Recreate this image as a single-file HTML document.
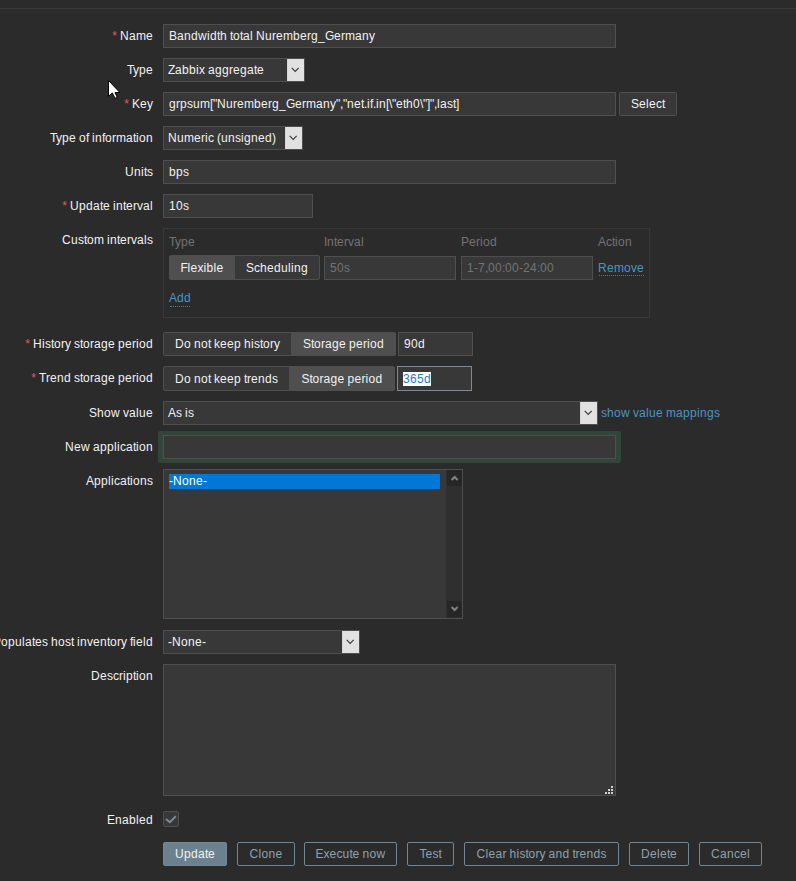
<!DOCTYPE html>
<html><head><meta charset="utf-8">
<style>
html,body{margin:0;padding:0;}
body{width:796px;height:881px;background:#2b2b2b;color:#f2f2f2;font-family:"Liberation Sans",sans-serif;font-size:12px;position:relative;overflow:hidden;}
div,span{box-sizing:border-box;}
.a{position:absolute;}
.topline{position:absolute;left:0;top:8px;width:796px;height:1px;background:#383838;}
.l{position:absolute;right:643px;height:24px;line-height:24px;white-space:nowrap;text-align:right;color:#f2f2f2;}
.req::before{content:"*";color:#e45959;margin-right:3px;}
.in{position:absolute;height:24px;background:#383838;border:1px solid #4f4f4f;line-height:22px;padding-left:5px;white-space:nowrap;overflow:hidden;color:#f2f2f2;}
.sel{position:absolute;height:24px;background:#383838;border:1px solid #4f4f4f;line-height:22px;padding-left:4px;white-space:nowrap;overflow:hidden;color:#f2f2f2;}
.arr{position:absolute;right:-1px;top:-1px;width:18px;height:24px;background:#e1e1e1;border:1px solid #d6d6d6;}
.arr svg{position:absolute;left:3px;top:8px;}
.seg{position:absolute;height:24px;border:1px solid #4f4f4f;background:#383838;line-height:22px;text-align:center;white-space:nowrap;color:#f2f2f2;}
.seg.on{background:#4f4f4f;}
.th{position:absolute;color:#737373;line-height:14px;}
.lnk{position:absolute;color:#4796c4;white-space:nowrap;}
.dis{color:#737373;}
.btn{position:absolute;height:24px;border:1px solid #6f8794;border-radius:2px;color:#8ea2ad;line-height:22px;text-align:center;white-space:nowrap;background:transparent;}
.btn.main{background:#6b818d;border-color:#728995;color:#f2f2f2;}
b{display:inline-block;font-weight:normal;text-align:left;}.wm2{width:-2px}.wm1{width:-1px}.w0{width:0px}.w1{width:1px}.w2{width:2px}.w3{width:3px}.w4{width:4px}.w5{width:5px}.w6{width:6px}.w7{width:7px}.w8{width:8px}.w9{width:9px}.w10{width:10px}.w11{width:11px}.w12{width:12px}.w13{width:13px}.w14{width:14px}.w15{width:15px}.w16{width:16px}.w17{width:17px}.w18{width:18px}.w19{width:19px}
</style></head>
<body>
<div class="topline"></div>

<!-- Name -->
<div class="l req" style="top:24px"><b class="w9">N</b><b class="w7">a</b><b class="w10">m</b><b class="w7">e</b></div>
<div class="in" style="left:163px;top:24px;width:453px"><b class="w8">B</b><b class="w7">a</b><b class="w7">n</b><b class="w7">d</b><b class="w9">w</b><b class="w3">i</b><b class="w7">d</b><b class="w3">t</b><b class="w7">h</b><b class="w3">&nbsp;</b><b class="w3">t</b><b class="w7">o</b><b class="w3">t</b><b class="w7">a</b><b class="w3">l</b><b class="w3">&nbsp;</b><b class="w9">N</b><b class="w7">u</b><b class="w4">r</b><b class="w7">e</b><b class="w10">m</b><b class="w7">b</b><b class="w7">e</b><b class="w4">r</b><b class="w7">g</b><b class="w7">_</b><b class="w9">G</b><b class="w7">e</b><b class="w4">r</b><b class="w10">m</b><b class="w7">a</b><b class="w7">n</b><b class="w6">y</b></div>

<!-- Type -->
<div class="l" style="top:58px"><b class="w6">T</b><b class="w6">y</b><b class="w7">p</b><b class="w7">e</b></div>
<div class="sel" style="left:163px;top:58px;width:142px"><b class="w7">Z</b><b class="w7">a</b><b class="w7">b</b><b class="w7">b</b><b class="w3">i</b><b class="w6">x</b><b class="w3">&nbsp;</b><b class="w7">a</b><b class="w7">g</b><b class="w7">g</b><b class="w4">r</b><b class="w7">e</b><b class="w7">g</b><b class="w7">a</b><b class="w3">t</b><b class="w7">e</b><div class="arr"><svg width="9" height="6" viewBox="0 0 9 6"><path d="M0.7 0.8 L4.2 4.3 L7.7 0.8" fill="none" stroke="#3c3c3c" stroke-width="1.2"/></svg></div></div>

<!-- Key -->
<div class="l req" style="top:92px"><b class="w8">K</b><b class="w7">e</b><b class="w6">y</b></div>
<div class="in" style="left:163px;top:92px;width:453px"><b class="w7">g</b><b class="w4">r</b><b class="w7">p</b><b class="w6">s</b><b class="w7">u</b><b class="w10">m</b><b class="w3">[</b><b class="w4">&quot;</b><b class="w9">N</b><b class="w7">u</b><b class="w4">r</b><b class="w7">e</b><b class="w10">m</b><b class="w7">b</b><b class="w7">e</b><b class="w4">r</b><b class="w7">g</b><b class="w7">_</b><b class="w9">G</b><b class="w7">e</b><b class="w4">r</b><b class="w10">m</b><b class="w7">a</b><b class="w7">n</b><b class="w6">y</b><b class="w4">&quot;</b><b class="w3">,</b><b class="w4">&quot;</b><b class="w7">n</b><b class="w7">e</b><b class="w3">t</b><b class="w3">.</b><b class="w3">i</b><b class="w3">f</b><b class="w3">.</b><b class="w3">i</b><b class="w7">n</b><b class="w3">[</b><b class="w3">\</b><b class="w4">&quot;</b><b class="w7">e</b><b class="w3">t</b><b class="w7">h</b><b class="w7">0</b><b class="w3">\</b><b class="w4">&quot;</b><b class="w3">]</b><b class="w4">&quot;</b><b class="w3">,</b><b class="w3">l</b><b class="w7">a</b><b class="w6">s</b><b class="w3">t</b><b class="w3">]</b></div>
<div class="a" style="left:619px;top:92px;width:58px;height:24px;background:#383838;border:1px solid #4f4f4f;border-radius:2px;line-height:22px;text-align:center;"><b class="w8">S</b><b class="w7">e</b><b class="w3">l</b><b class="w7">e</b><b class="w6">c</b><b class="w3">t</b></div>

<!-- Type of information -->
<div class="l" style="top:126px"><b class="w6">T</b><b class="w6">y</b><b class="w7">p</b><b class="w7">e</b><b class="w3">&nbsp;</b><b class="w7">o</b><b class="w3">f</b><b class="w3">&nbsp;</b><b class="w3">i</b><b class="w7">n</b><b class="w3">f</b><b class="w7">o</b><b class="w4">r</b><b class="w10">m</b><b class="w7">a</b><b class="w3">t</b><b class="w3">i</b><b class="w7">o</b><b class="w7">n</b></div>
<div class="sel" style="left:163px;top:126px;width:140px"><b class="w9">N</b><b class="w7">u</b><b class="w10">m</b><b class="w7">e</b><b class="w4">r</b><b class="w3">i</b><b class="w6">c</b><b class="w3">&nbsp;</b><b class="w4">(</b><b class="w7">u</b><b class="w7">n</b><b class="w6">s</b><b class="w3">i</b><b class="w7">g</b><b class="w7">n</b><b class="w7">e</b><b class="w7">d</b><b class="w4">)</b><div class="arr"><svg width="9" height="6" viewBox="0 0 9 6"><path d="M0.7 0.8 L4.2 4.3 L7.7 0.8" fill="none" stroke="#3c3c3c" stroke-width="1.2"/></svg></div></div>

<!-- Units -->
<div class="l" style="top:160px"><b class="w9">U</b><b class="w7">n</b><b class="w3">i</b><b class="w3">t</b><b class="w6">s</b></div>
<div class="in" style="left:163px;top:160px;width:453px"><b class="w7">b</b><b class="w7">p</b><b class="w6">s</b></div>

<!-- Update interval -->
<div class="l req" style="top:194px"><b class="w9">U</b><b class="w7">p</b><b class="w7">d</b><b class="w7">a</b><b class="w3">t</b><b class="w7">e</b><b class="w3">&nbsp;</b><b class="w3">i</b><b class="w7">n</b><b class="w3">t</b><b class="w7">e</b><b class="w4">r</b><b class="w6">v</b><b class="w7">a</b><b class="w3">l</b></div>
<div class="in" style="left:163px;top:194px;width:150px"><b class="w7">1</b><b class="w7">0</b><b class="w6">s</b></div>

<!-- Custom intervals -->
<div class="l" style="top:228px"><b class="w9">C</b><b class="w7">u</b><b class="w6">s</b><b class="w3">t</b><b class="w7">o</b><b class="w10">m</b><b class="w3">&nbsp;</b><b class="w3">i</b><b class="w7">n</b><b class="w3">t</b><b class="w7">e</b><b class="w4">r</b><b class="w6">v</b><b class="w7">a</b><b class="w3">l</b><b class="w6">s</b></div>
<div class="a" style="left:163px;top:228px;width:487px;height:90px;border:1px solid #383838;"></div>
<div class="th" style="left:169px;top:235px"><b class="w6">T</b><b class="w6">y</b><b class="w7">p</b><b class="w7">e</b></div>
<div class="th" style="left:324px;top:235px"><b class="w3">I</b><b class="w7">n</b><b class="w3">t</b><b class="w7">e</b><b class="w4">r</b><b class="w6">v</b><b class="w7">a</b><b class="w3">l</b></div>
<div class="th" style="left:461px;top:235px"><b class="w8">P</b><b class="w7">e</b><b class="w4">r</b><b class="w3">i</b><b class="w7">o</b><b class="w7">d</b></div>
<div class="th" style="left:598px;top:235px"><b class="w8">A</b><b class="w6">c</b><b class="w3">t</b><b class="w3">i</b><b class="w7">o</b><b class="w7">n</b></div>
<div class="seg on" style="left:169px;top:255px;width:66px;height:25px;line-height:24px;border-radius:2px 0 0 2px"><b class="w7">F</b><b class="w3">l</b><b class="w7">e</b><b class="w6">x</b><b class="w3">i</b><b class="w7">b</b><b class="w3">l</b><b class="w7">e</b></div>
<div class="seg" style="left:234px;top:255px;width:86px;height:25px;line-height:24px;border-radius:0 2px 2px 0"><b class="w8">S</b><b class="w6">c</b><b class="w7">h</b><b class="w7">e</b><b class="w7">d</b><b class="w7">u</b><b class="w3">l</b><b class="w3">i</b><b class="w7">n</b><b class="w7">g</b></div>
<div class="in dis" style="left:324px;top:256px;width:132px"><b class="w7">5</b><b class="w7">0</b><b class="w6">s</b></div>
<div class="in dis" style="left:461px;top:256px;width:132px"><b class="w7">1</b><b class="w4">-</b><b class="w7">7</b><b class="w3">,</b><b class="w7">0</b><b class="w7">0</b><b class="w3">:</b><b class="w7">0</b><b class="w7">0</b><b class="w4">-</b><b class="w7">2</b><b class="w7">4</b><b class="w3">:</b><b class="w7">0</b><b class="w7">0</b></div>
<div class="lnk" style="left:598px;top:256px;line-height:24px;"><b class="w9">R</b><b class="w7">e</b><b class="w10">m</b><b class="w7">o</b><b class="w6">v</b><b class="w7">e</b></div><div class="a" style="left:599px;top:275px;width:45px;height:1px;border-top:1px dotted #3f7fa6;"></div>
<div class="lnk" style="left:169px;top:286px;line-height:24px;"><b class="w8">A</b><b class="w7">d</b><b class="w7">d</b></div><div class="a" style="left:170px;top:306px;width:20px;height:1px;border-top:1px dotted #3f7fa6;"></div>

<!-- History -->
<div class="l req" style="top:332px"><b class="w9">H</b><b class="w3">i</b><b class="w6">s</b><b class="w3">t</b><b class="w7">o</b><b class="w4">r</b><b class="w6">y</b><b class="w3">&nbsp;</b><b class="w6">s</b><b class="w3">t</b><b class="w7">o</b><b class="w4">r</b><b class="w7">a</b><b class="w7">g</b><b class="w7">e</b><b class="w3">&nbsp;</b><b class="w7">p</b><b class="w7">e</b><b class="w4">r</b><b class="w3">i</b><b class="w7">o</b><b class="w7">d</b></div>
<div class="seg" style="left:163px;top:332px;width:129px;border-radius:2px 0 0 2px"><b class="w9">D</b><b class="w7">o</b><b class="w3">&nbsp;</b><b class="w7">n</b><b class="w7">o</b><b class="w3">t</b><b class="w3">&nbsp;</b><b class="w6">k</b><b class="w7">e</b><b class="w7">e</b><b class="w7">p</b><b class="w3">&nbsp;</b><b class="w7">h</b><b class="w3">i</b><b class="w6">s</b><b class="w3">t</b><b class="w7">o</b><b class="w4">r</b><b class="w6">y</b></div>
<div class="seg on" style="left:291px;top:332px;width:105px;border-radius:0 2px 2px 0"><b class="w8">S</b><b class="w3">t</b><b class="w7">o</b><b class="w4">r</b><b class="w7">a</b><b class="w7">g</b><b class="w7">e</b><b class="w3">&nbsp;</b><b class="w7">p</b><b class="w7">e</b><b class="w4">r</b><b class="w3">i</b><b class="w7">o</b><b class="w7">d</b></div>
<div class="in" style="left:398px;top:332px;width:75px"><b class="w7">9</b><b class="w7">0</b><b class="w7">d</b></div>

<!-- Trend -->
<div class="l req" style="top:366px"><b class="w7">T</b><b class="w4">r</b><b class="w7">e</b><b class="w7">n</b><b class="w7">d</b><b class="w3">&nbsp;</b><b class="w6">s</b><b class="w3">t</b><b class="w7">o</b><b class="w4">r</b><b class="w7">a</b><b class="w7">g</b><b class="w7">e</b><b class="w3">&nbsp;</b><b class="w7">p</b><b class="w7">e</b><b class="w4">r</b><b class="w3">i</b><b class="w7">o</b><b class="w7">d</b></div>
<div class="seg" style="left:163px;top:366px;width:127px;height:25px;line-height:24px;border-radius:2px 0 0 2px"><b class="w9">D</b><b class="w7">o</b><b class="w3">&nbsp;</b><b class="w7">n</b><b class="w7">o</b><b class="w3">t</b><b class="w3">&nbsp;</b><b class="w6">k</b><b class="w7">e</b><b class="w7">e</b><b class="w7">p</b><b class="w3">&nbsp;</b><b class="w3">t</b><b class="w4">r</b><b class="w7">e</b><b class="w7">n</b><b class="w7">d</b><b class="w6">s</b></div>
<div class="seg on" style="left:289px;top:366px;width:106px;height:25px;line-height:24px;border-radius:0 2px 2px 0"><b class="w8">S</b><b class="w3">t</b><b class="w7">o</b><b class="w4">r</b><b class="w7">a</b><b class="w7">g</b><b class="w7">e</b><b class="w3">&nbsp;</b><b class="w7">p</b><b class="w7">e</b><b class="w4">r</b><b class="w3">i</b><b class="w7">o</b><b class="w7">d</b></div>
<div class="in" style="left:397px;top:366px;width:75px;height:25px;line-height:24px;border-color:#768d99;"><span style="background:#fff;color:#1e7ad6;"><b class="w7">3</b><b class="w7">6</b><b class="w7">5</b><b class="w7">d</b></span></div>

<!-- Show value -->
<div class="l" style="top:401px"><b class="w8">S</b><b class="w7">h</b><b class="w7">o</b><b class="w9">w</b><b class="w3">&nbsp;</b><b class="w6">v</b><b class="w7">a</b><b class="w3">l</b><b class="w7">u</b><b class="w7">e</b></div>
<div class="sel" style="left:163px;top:401px;width:435px"><b class="w8">A</b><b class="w6">s</b><b class="w3">&nbsp;</b><b class="w3">i</b><b class="w6">s</b><div class="arr"><svg width="9" height="6" viewBox="0 0 9 6"><path d="M0.7 0.8 L4.2 4.3 L7.7 0.8" fill="none" stroke="#3c3c3c" stroke-width="1.2"/></svg></div></div>
<div class="lnk" style="left:601px;top:401px;line-height:24px;"><b class="w6">s</b><b class="w7">h</b><b class="w7">o</b><b class="w9">w</b><b class="w3">&nbsp;</b><b class="w6">v</b><b class="w7">a</b><b class="w3">l</b><b class="w7">u</b><b class="w7">e</b><b class="w3">&nbsp;</b><b class="w10">m</b><b class="w7">a</b><b class="w7">p</b><b class="w7">p</b><b class="w3">i</b><b class="w7">n</b><b class="w7">g</b><b class="w6">s</b></div>

<!-- New application -->
<div class="l" style="top:435px"><b class="w9">N</b><b class="w7">e</b><b class="w9">w</b><b class="w3">&nbsp;</b><b class="w7">a</b><b class="w7">p</b><b class="w7">p</b><b class="w3">l</b><b class="w3">i</b><b class="w6">c</b><b class="w7">a</b><b class="w3">t</b><b class="w3">i</b><b class="w7">o</b><b class="w7">n</b></div>
<div class="a" style="left:158px;top:431px;width:463px;height:32px;background:#31453a;border-radius:2px;"></div>
<div class="in" style="left:163px;top:435px;width:453px"></div>

<!-- Applications -->
<div class="l" style="top:469px"><b class="w8">A</b><b class="w7">p</b><b class="w7">p</b><b class="w3">l</b><b class="w3">i</b><b class="w6">c</b><b class="w7">a</b><b class="w3">t</b><b class="w3">i</b><b class="w7">o</b><b class="w7">n</b><b class="w6">s</b></div>
<div class="a" style="left:163px;top:469px;width:300px;height:150px;background:#383838;border:1px solid #4f4f4f;"></div>
<div class="a" style="left:169px;top:474px;width:271px;height:15px;background:#0078d7;outline:1px solid #45362c;line-height:15px;color:#fff;"><b class="w4">-</b><b class="w9">N</b><b class="w7">o</b><b class="w7">n</b><b class="w7">e</b><b class="w4">-</b></div>
<div class="a" style="left:446px;top:470px;width:16px;height:148px;background:#2f2f2f;"></div>
<div class="a" style="left:447px;top:470px;width:15px;height:16px;background:#262626;"></div>
<div class="a" style="left:447px;top:601px;width:15px;height:16px;background:#262626;"></div>
<svg class="a" style="left:447px;top:470px" width="15" height="16" viewBox="0 0 15 16"><path d="M4.6 10 L7.6 7 L10.6 10" fill="none" stroke="#828282" stroke-width="2"/></svg>
<svg class="a" style="left:447px;top:601px" width="15" height="16" viewBox="0 0 15 16"><path d="M4.6 6 L7.6 9 L10.6 6" fill="none" stroke="#828282" stroke-width="2"/></svg>

<!-- Inventory -->
<div class="l" style="top:630px"><b class="w8">P</b><b class="w7">o</b><b class="w7">p</b><b class="w7">u</b><b class="w3">l</b><b class="w7">a</b><b class="w3">t</b><b class="w7">e</b><b class="w6">s</b><b class="w3">&nbsp;</b><b class="w7">h</b><b class="w7">o</b><b class="w6">s</b><b class="w3">t</b><b class="w3">&nbsp;</b><b class="w3">i</b><b class="w7">n</b><b class="w6">v</b><b class="w7">e</b><b class="w7">n</b><b class="w3">t</b><b class="w7">o</b><b class="w4">r</b><b class="w6">y</b><b class="w3">&nbsp;</b><b class="w3">f</b><b class="w3">i</b><b class="w7">e</b><b class="w3">l</b><b class="w7">d</b></div>
<div class="sel" style="left:163px;top:630px;width:197px"><b class="w4">-</b><b class="w9">N</b><b class="w7">o</b><b class="w7">n</b><b class="w7">e</b><b class="w4">-</b><div class="arr"><svg width="9" height="6" viewBox="0 0 9 6"><path d="M0.7 0.8 L4.2 4.3 L7.7 0.8" fill="none" stroke="#3c3c3c" stroke-width="1.2"/></svg></div></div>

<!-- Description -->
<div class="l" style="top:664px"><b class="w9">D</b><b class="w7">e</b><b class="w6">s</b><b class="w6">c</b><b class="w4">r</b><b class="w3">i</b><b class="w7">p</b><b class="w3">t</b><b class="w3">i</b><b class="w7">o</b><b class="w7">n</b></div>
<div class="a" style="left:163px;top:664px;width:453px;height:132px;background:#383838;border:1px solid #4f4f4f;"></div>
<svg class="a" style="left:604px;top:785px" width="10" height="10" viewBox="0 0 10 10" fill="#d0d0d0"><rect x="7" y="1" width="2" height="2"/><rect x="4" y="4" width="2" height="2"/><rect x="7" y="4" width="2" height="2"/><rect x="1" y="7" width="2" height="2"/><rect x="4" y="7" width="2" height="2"/><rect x="7" y="7" width="2" height="2"/></svg>

<!-- Enabled -->
<div class="l" style="top:808px"><b class="w8">E</b><b class="w7">n</b><b class="w7">a</b><b class="w7">b</b><b class="w3">l</b><b class="w7">e</b><b class="w7">d</b></div>
<div class="a" style="left:163px;top:811px;width:16px;height:16px;background:#383838;border:1px solid #4f4f4f;border-radius:2px;"></div>
<svg class="a" style="left:163px;top:811px" width="16" height="16" viewBox="0 0 16 16"><path d="M3 8 L6.8 11.2 L12.8 5.3" fill="none" stroke="#768d99" stroke-width="2"/></svg>

<!-- Buttons -->
<div class="btn main" style="left:163px;top:842px;width:64px"><b class="w9">U</b><b class="w7">p</b><b class="w7">d</b><b class="w7">a</b><b class="w3">t</b><b class="w7">e</b></div>
<div class="btn" style="left:237px;top:842px;width:58px"><b class="w9">C</b><b class="w3">l</b><b class="w7">o</b><b class="w7">n</b><b class="w7">e</b></div>
<div class="btn" style="left:304px;top:842px;width:93px"><b class="w8">E</b><b class="w6">x</b><b class="w7">e</b><b class="w6">c</b><b class="w7">u</b><b class="w3">t</b><b class="w7">e</b><b class="w3">&nbsp;</b><b class="w7">n</b><b class="w7">o</b><b class="w9">w</b></div>
<div class="btn" style="left:407px;top:842px;width:47px"><b class="w6">T</b><b class="w7">e</b><b class="w6">s</b><b class="w3">t</b></div>
<div class="btn" style="left:464px;top:842px;width:155px"><b class="w9">C</b><b class="w3">l</b><b class="w7">e</b><b class="w7">a</b><b class="w4">r</b><b class="w3">&nbsp;</b><b class="w7">h</b><b class="w3">i</b><b class="w6">s</b><b class="w3">t</b><b class="w7">o</b><b class="w4">r</b><b class="w6">y</b><b class="w3">&nbsp;</b><b class="w7">a</b><b class="w7">n</b><b class="w7">d</b><b class="w3">&nbsp;</b><b class="w3">t</b><b class="w4">r</b><b class="w7">e</b><b class="w7">n</b><b class="w7">d</b><b class="w6">s</b></div>
<div class="btn" style="left:629px;top:842px;width:60px"><b class="w9">D</b><b class="w7">e</b><b class="w3">l</b><b class="w7">e</b><b class="w3">t</b><b class="w7">e</b></div>
<div class="btn" style="left:699px;top:842px;width:63px"><b class="w9">C</b><b class="w7">a</b><b class="w7">n</b><b class="w6">c</b><b class="w7">e</b><b class="w3">l</b></div>

<svg class="a" style="left:107px;top:79px" width="14" height="21" viewBox="0 0 14 21"><path d="M1.5 1.5 L1.5 17.3 L5.3 13.9 L8 19.3 L10.3 18.5 L8 13.5 L12.9 13.5 Z" fill="#fff" stroke="#000" stroke-width="1" stroke-linejoin="miter"/></svg>
</body></html>
